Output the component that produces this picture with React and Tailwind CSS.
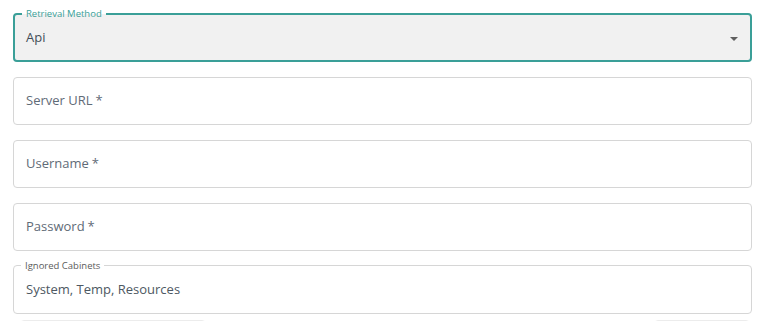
import React from "react";

const fields = [
  { id: "server", placeholder: "Server URL", required: true },
  { id: "username", placeholder: "Username", required: true },
  { id: "password", placeholder: "Password", required: true },
];

const OutlinedLabel = ({ label, focused }) => (
  <fieldset
    className={`absolute inset-x-0 -top-[6px] bottom-0 rounded-[4px] pointer-events-none ${
      focused ? "border-2 border-[#3a9f98]" : "border border-[#d6d6d6]"
    }`}
  >
    <legend
      className={`ml-[7px] px-[4px] text-[9.5px] leading-[11px] ${
        focused ? "text-[#3a9f98]" : "text-[#5b5b5b]"
      }`}
    >
      {label}
    </legend>
  </fieldset>
);

const App = () => {
  return (
    <div
      className="w-[780px] h-[321px] overflow-hidden bg-white"
      style={{ fontFamily: '"Open Sans", "Liberation Sans", sans-serif' }}
    >
      <div className="flex flex-col gap-[15px] pl-[13px] pr-[28px] pt-[14px]">
        {/* Retrieval method select */}
        <div className="relative h-[48px] rounded-[4px] bg-[#f1f1f1] flex items-center justify-between pl-[13px] pr-[14px] text-[13px] text-[#434d57]">
          <span>Api</span>
          <svg width="8" height="4" viewBox="0 0 8 4" className="mt-[1px]">
            <path d="M0 0 L8 0 L4 4 Z" fill="#5f5f5f" />
          </svg>
          <OutlinedLabel label="Retrieval Method" focused />
        </div>

        {fields.map((f) => (
          <div
            key={f.id}
            className="h-[48px] rounded-[4px] border border-[#d6d6d6] flex items-center pl-[12px] text-[13px] text-[#5f6b77]"
          >
            <span>
              {f.placeholder}
              {f.required && <span className="ml-[3px]">*</span>}
            </span>
          </div>
        ))}

        {/* Ignored cabinets */}
        <div className="relative h-[48px] flex items-center pl-[13px] text-[13px] text-[#4d5862]">
          <span>System, Temp, Resources</span>
          <OutlinedLabel label="Ignored Cabinets" />
        </div>
      </div>

      <div className="flex justify-between pl-[20px] pr-[30px] mt-[6px]">
        <div className="w-[186px] h-[30px] rounded-[4px] border border-[#ececec]" />
        <div className="w-[96px] h-[30px] rounded-[4px] border border-[#ececec]" />
      </div>
    </div>
  );
};

export default App;
